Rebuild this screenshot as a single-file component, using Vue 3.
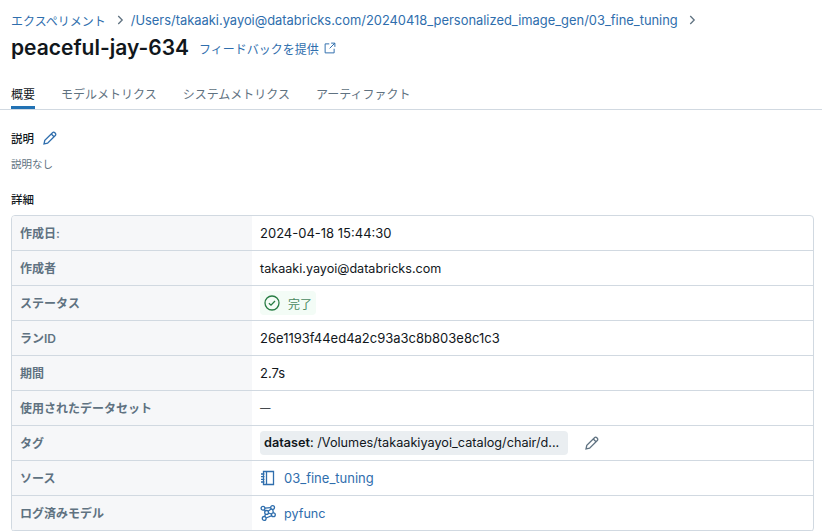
<template>
  <div class="page">
    <div class="breadcrumb">
      <a class="jp">エクスペリメント</a>
      <svg class="chev" viewBox="0 0 16 16"><path d="M6 3.5 10.5 8 6 12.5" /></svg>
      <a>/Users/takaaki.yayoi@databricks.com/20240418_personalized_image_gen/03_fine_tuning</a>
      <svg class="chev" viewBox="0 0 16 16"><path d="M6 3.5 10.5 8 6 12.5" /></svg>
    </div>
    <div class="title-row">
      <h1>peaceful-jay-634</h1>
      <a class="feedback">
        フィードバックを提供
        <svg viewBox="0 0 16 16"><path d="M7 2.5H1.5v12h12V9M9.5 1.5h5v5M14.5 1.5 7.5 8.5" /></svg>
      </a>
    </div>

    <div class="tabs">
      <div v-for="(t, i) in tabs" :key="t" class="tab" :class="{ active: i === 0 }">{{ t }}</div>
    </div>

    <div class="desc-head">
      <span>説明</span>
      <svg viewBox="0 0 16 16"><path d="M2 14l.8-3.6 7.7-7.7a1.6 1.6 0 0 1 2.3 0l.5.5a1.6 1.6 0 0 1 0 2.3l-7.7 7.7zM9.3 4l2.7 2.7" /></svg>
    </div>
    <p class="no-desc">説明なし</p>

    <div class="detail-head">詳細</div>
    <div class="table">
      <div v-for="r in rows" :key="r.label" class="row">
        <div class="label">{{ r.label }}</div>
        <div class="value">
          <template v-if="r.type === 'status'">
            <span class="status">
              <svg viewBox="0 0 16 16"><circle cx="8" cy="8" r="7" /><path d="M4.9 8.2 7 10.2l4-4.2" /></svg>
              <span class="status-text">完了</span>
            </span>
          </template>
          <template v-else-if="r.type === 'tag'">
            <span class="tag"><b>dataset</b>: /Volumes/takaakiyayoi_catalog/chair/d...</span>
            <svg class="tag-edit" viewBox="0 0 16 16"><path d="M2 14l.8-3.6 7.7-7.7a1.6 1.6 0 0 1 2.3 0l.5.5a1.6 1.6 0 0 1 0 2.3l-7.7 7.7zM9.3 4l2.7 2.7" /></svg>
          </template>
          <template v-else-if="r.type === 'source'">
            <a class="link">
              <svg viewBox="0 0 16 16"><path d="M3.5 1.5h10v13h-10zM6.5 1.5v13M1 4h3.5M1 6.7h3.5M1 9.4h3.5M1 12h3.5" /></svg>
              {{ r.value }}
            </a>
          </template>
          <template v-else-if="r.type === 'model'">
            <a class="link model">
              <svg viewBox="0 0 16 16">
                <circle cx="3" cy="3.3" r="1.9" /><circle cx="12.6" cy="2.6" r="1.9" /><circle cx="6.6" cy="7.4" r="1.9" />
                <circle cx="13.4" cy="9.8" r="1.9" /><circle cx="4.2" cy="13.4" r="1.9" />
                <path d="M4.9 3.2l5.8-.5M4.4 4.6l1 1.4M8.1 6.2l3.3-2.4M12.8 4.5l.5 3.4M8.4 8l3.2 1.2M5.6 9.2l-1 2.3M6 13l5.9-2.4" />
              </svg>
              {{ r.value }}
            </a>
          </template>
          <span v-else :class="r.cls">{{ r.value }}</span>
        </div>
      </div>
    </div>
  </div>
</template>

<script setup>
const tabs = ['概要', 'モデルメトリクス', 'システムメトリクス', 'アーティファクト']

const rows = [
  { label: '作成日:', value: '2024-04-18 15:44:30' },
  { label: '作成者', value: 'takaaki.yayoi@databricks.com', cls: 'email' },
  { label: 'ステータス', type: 'status' },
  { label: 'ランID', value: '26e1193f44ed4a2c93a3c8b803e8c1c3' },
  { label: '期間', value: '2.7s' },
  { label: '使用されたデータセット', value: '—', cls: 'dash' },
  { label: 'タグ', type: 'tag' },
  { label: 'ソース', type: 'source', value: '03_fine_tuning' },
  { label: 'ログ済みモデル', type: 'model', value: 'pyfunc' },
]
</script>

<style>
html, body {
  margin: 0;
  background: #fff;
  overflow: hidden;
}
</style>

<style scoped>
.page {
  width: 822px;
  height: 531px;
  overflow: hidden;
  box-sizing: border-box;
  padding-top: 12px;
  font-family: Inter, "Noto Sans CJK JP", sans-serif;
  font-size: 13px;
  color: #11171c;
}

a {
  color: #2f6ead;
}

svg {
  fill: none;
  stroke: currentColor;
  stroke-width: 1.3;
}

.breadcrumb {
  display: flex;
  align-items: center;
  height: 16px;
  padding-left: 11px;
  font-size: 12.9px;
  white-space: nowrap;
}

.breadcrumb .jp {
  font-size: 12px;
}

.chev {
  width: 14px;
  height: 14px;
  margin: 0 4px 0 7px;
  color: #5f7281;
  stroke-width: 1.5;
}

.title-row {
  display: flex;
  align-items: center;
  height: 28px;
  margin-top: 6px;
  padding-left: 11px;
}

h1 {
  margin: 0;
  font-size: 21px;
  font-weight: 600;
  line-height: 28px;
}

.feedback {
  display: flex;
  align-items: center;
  margin-left: 10px;
  font-size: 12px;
}

.feedback svg {
  width: 12px;
  height: 12px;
  margin-left: 5px;
}

.tabs {
  display: flex;
  gap: 26px;
  height: 29px;
  margin-top: 18px;
  padding-left: 11px;
  border-bottom: 1px solid #d1d9e1;
}

.tab {
  height: 28px;
  line-height: 30px;
  font-size: 12px;
  color: #5f7281;
}

.tab.active {
  height: 29px;
  box-sizing: border-box;
  color: #11171c;
  border-bottom: 3px solid #2272b4;
}

.desc-head {
  display: flex;
  align-items: center;
  gap: 8px;
  height: 18px;
  margin-top: 19px;
  padding-left: 11px;
  font-size: 11.5px;
  font-weight: 500;
}

.desc-head svg {
  width: 16px;
  height: 16px;
  color: #2f6ead;
}

.no-desc {
  margin: 10px 0 0;
  padding-left: 11px;
  font-size: 10.5px;
  line-height: 16px;
  color: #5f7281;
}

.detail-head {
  height: 16px;
  margin-top: 19px;
  padding-left: 11px;
  font-size: 11.5px;
  font-weight: 500;
  line-height: 16px;
}

.table {
  box-sizing: border-box;
  width: 803px;
  margin: 7px 0 0 11px;
  border: 1px solid #d1d9e1;
  border-radius: 4px;
  overflow: hidden;
}

.row {
  display: flex;
  height: 35px;
  box-sizing: border-box;
  border-bottom: 1px solid #d1d9e1;
}

.label {
  box-sizing: border-box;
  flex: 0 0 240px;
  padding-left: 8px;
  line-height: 35px;
  font-size: 12px;
  font-weight: 600;
  color: #5f7281;
  background: #f6f7f9;
}

.value {
  display: flex;
  align-items: center;
  padding-left: 8px;
  font-size: 13px;
}

.email {
  font-size: 12.6px;
}

.dash {
  font-size: 10.5px;
}

.status {
  display: flex;
  align-items: center;
  gap: 8px;
  height: 24px;
  padding: 0 4px;
  font-size: 12px;
  color: #277c43;
  background: #f3fcf6;
  border-radius: 4px;
}

.status-text {
  color: #4a8a60;
}

.status svg {
  width: 16px;
  height: 16px;
}

.tag {
  box-sizing: border-box;
  height: 24px;
  width: 308px;
  padding: 0 4px;
  line-height: 24px;
  white-space: nowrap;
  font-size: 12.7px;
  background: #eaeef1;
  border-radius: 4px;
}

.tag b {
  font-weight: 600;
}

.tag-edit {
  width: 16px;
  height: 16px;
  margin-left: 16px;
  color: #5f7281;
}

.link {
  display: flex;
  align-items: center;
  gap: 8px;
}

.link.model {
  font-size: 12.6px;
}

.link svg {
  width: 16px;
  height: 16px;
}
</style>
